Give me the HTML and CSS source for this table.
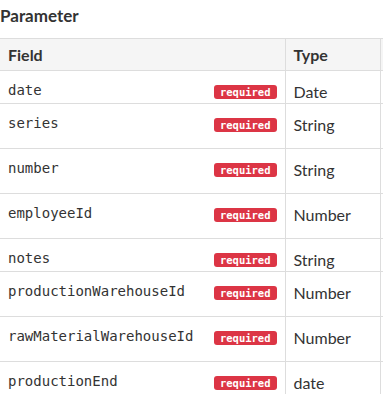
FILE: index.html
```html
<!doctype html>
<html lang="en">
	<head>
		<meta charset="utf-8">
		<meta name="viewport" content="width=device-width, initial-scale=1.0">
		<title>Parameter</title>
		<link rel="stylesheet" href="styles.css">
	</head>
  <body>
    <main class="api-section">
      <h4 class="section-title">Parameter</h4>

      <div class="table-wrap">
        <table class="param-table">
          <colgroup>
            <col class="col-field">
            <col class="col-type">
            <col class="col-desc">
          </colgroup>
          <thead>
            <tr>
              <th>Field</th>
              <th>Type</th>
              <th></th>
            </tr>
          </thead>
          <tbody>
            <tr class="row-short">
              <td><div class="field"><code>date</code><span class="badge">required</span></div></td>
              <td>Date</td>
              <td></td>
            </tr>
            <tr class="row-tall">
              <td><div class="field"><code>series</code><span class="badge">required</span></div></td>
              <td>String</td>
              <td></td>
            </tr>
            <tr class="row-tall">
              <td><div class="field"><code>number</code><span class="badge">required</span></div></td>
              <td>String</td>
              <td></td>
            </tr>
            <tr class="row-tall">
              <td><div class="field"><code>employeeId</code><span class="badge">required</span></div></td>
              <td>Number</td>
              <td></td>
            </tr>
            <tr class="row-short">
              <td><div class="field"><code>notes</code><span class="badge">required</span></div></td>
              <td>String</td>
              <td></td>
            </tr>
            <tr class="row-tall">
              <td><div class="field"><code>productionWarehouseId</code><span class="badge">required</span></div></td>
              <td>Number</td>
              <td></td>
            </tr>
            <tr class="row-tall">
              <td><div class="field"><code>rawMaterialWarehouseId</code><span class="badge">required</span></div></td>
              <td>Number</td>
              <td></td>
            </tr>
            <tr class="row-short">
              <td><div class="field"><code>productionEnd</code><span class="badge">required</span></div></td>
              <td>date</td>
              <td></td>
            </tr>
          </tbody>
        </table>
      </div>
    </main>
  </body>
</html>
```

FILE: styles.css
```css
* { box-sizing: border-box; }

:root {
	--font-family: Lato, "Open Sans", sans-serif;
	--font-family-monospace: "DejaVu Sans Mono", "Liberation Mono", monospace;
	--text-color: #333;
	--border-color: #ddd;
	--head-bg: #f5f5f5;
	--danger: #dc3545;
}

html,
body {
	margin: 0;
	padding: 0;
	font-family: var(--font-family);
	color: var(--text-color);
	background-color: #fff;
	overflow: hidden;
}

.section-title {
	font-size: 17px;
	font-weight: 700;
	line-height: 24px;
	margin: 4px 0 10px;
}

.table-wrap {
	width: 383px;
	overflow: hidden;
}

/* Params table */
.param-table {
	table-layout: fixed;
	width: 680px;
	border-collapse: collapse;
	font-size: 16px;
}
.col-field { width: 285px; }
.col-type { width: 95px; }
.col-desc { width: 300px; }

.param-table th,
.param-table td {
	border: 1px solid var(--border-color);
	padding: 11px 8px 0;
	text-align: left;
	vertical-align: top;
	line-height: 20px;
}
.param-table th:first-child,
.param-table td:first-child {
	border-left: 0;
}

.param-table th {
	background-color: var(--head-bg);
	font-weight: 700;
	padding: 5px 8px;
	line-height: 21px;
	height: 32px;
}

.row-short { height: 33px; }
.row-tall { height: 45px; }

.field {
	display: flex;
	justify-content: space-between;
	align-items: center;
}

code {
	font-family: var(--font-family-monospace);
	font-size: 14px;
	line-height: 20px;
	margin-top: -2px;
}

.badge {
	display: inline-block;
	font-family: var(--font-family-monospace);
	font-size: 10.5px;
	font-weight: 700;
	line-height: 14px;
	padding: 0 6px;
	color: #fff;
	background-color: var(--danger);
	border-radius: 3px;
	margin-top: 2px;
}
```
